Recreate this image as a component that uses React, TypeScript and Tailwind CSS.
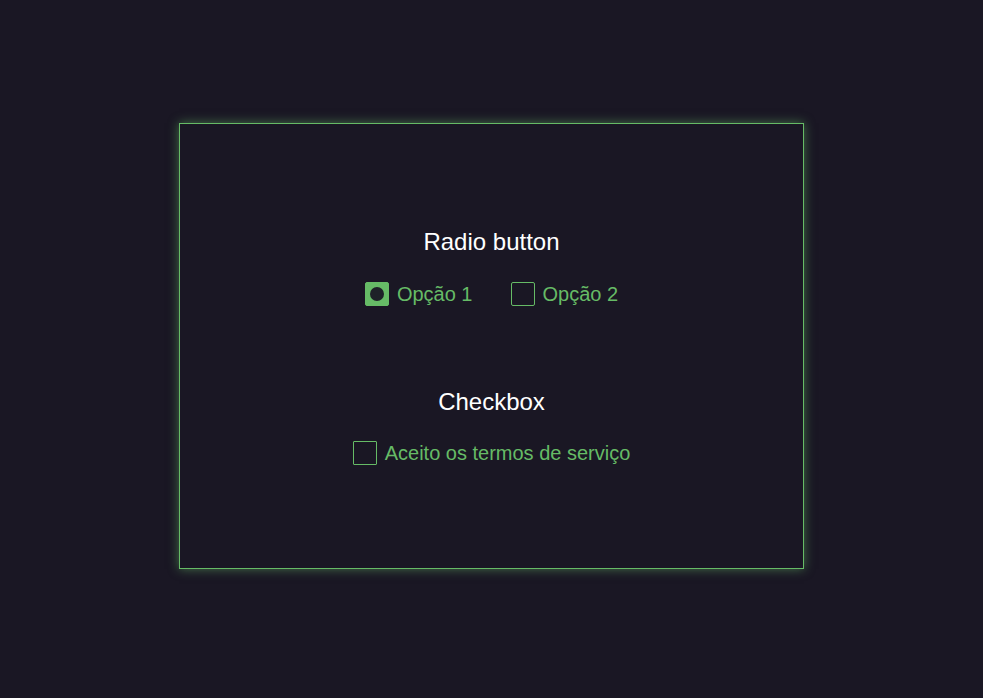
import React, { useState } from "react";

function RadioOption({ label, checked, onClick }: { label: string; checked: boolean; onClick: () => void }) {
  return (
    <label className="flex items-center gap-2 cursor-pointer" onClick={onClick}>
      <span
        className={
          checked
            ? "flex h-6 w-6 items-center justify-center rounded-[2px] border border-[#66bb66] bg-[#66bb66]"
            : "flex h-6 w-6 items-center justify-center rounded-[2px] border border-[#66bb66]"
        }
      >
        {checked && <span className="h-[14px] w-[14px] rounded-full bg-[#1e2128]" />}
      </span>
      <span className="text-[20px] leading-6 text-[#66bb66]">{label}</span>
    </label>
  );
}

export default function App() {
  const [option, setOption] = useState(1);
  const [accepted, setAccepted] = useState(false);

  return (
    <div
      className="min-h-[698px] w-full bg-[#1a1724] pt-[123px]"
      style={{ fontFamily: '"Liberation Sans", Arial, sans-serif' }}
    >
      <div className="mx-auto flex h-[446px] w-[625px] flex-col items-center justify-center gap-[82px] border border-[#66bb66] shadow-[0_0_10px_rgba(102,187,102,0.55)]">
        {/* Radio button */}
        <div className="flex flex-col items-center">
          <h2 className="mb-[26px] text-[24px] leading-[28px] text-white">Radio button</h2>
          <div className="flex items-center gap-[38px]">
            <RadioOption label="Opção 1" checked={option === 1} onClick={() => setOption(1)} />
            <RadioOption label="Opção 2" checked={option === 2} onClick={() => setOption(2)} />
          </div>
        </div>

        {/* Checkbox */}
        <div className="flex flex-col items-center">
          <h2 className="mb-[25px] text-[24px] leading-[28px] text-white">Checkbox</h2>
          <label className="flex items-center gap-2 cursor-pointer" onClick={() => setAccepted(!accepted)}>
            <span
              className={
                accepted
                  ? "flex h-6 w-6 items-center justify-center rounded-[1px] border border-[#66bb66] bg-[#66bb66]"
                  : "flex h-6 w-6 items-center justify-center rounded-[1px] border border-[#66bb66]"
              }
            />
            <span className="text-[20px] leading-6 text-[#66bb66]">Aceito os termos de serviço</span>
          </label>
        </div>
      </div>
    </div>
  );
}
